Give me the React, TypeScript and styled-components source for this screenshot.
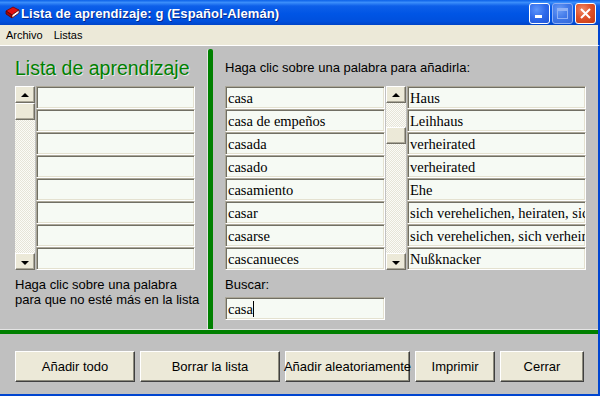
import React from 'react';
import styled, { createGlobalStyle } from 'styled-components';

const GlobalStyle = createGlobalStyle`
  html, body {
    margin: 0;
    padding: 0;
    background: #c0c0c0;
  }
  * {
    box-sizing: border-box;
  }
`;

const LEARN_ROWS = 8;

const WORDS = [
  { es: 'casa', de: 'Haus' },
  { es: 'casa de empeños', de: 'Leihhaus' },
  { es: 'casada', de: 'verheirated' },
  { es: 'casado', de: 'verheirated' },
  { es: 'casamiento', de: 'Ehe' },
  { es: 'casar', de: 'sich verehelichen, heiraten, sich verheiraten' },
  { es: 'casarse', de: 'sich verehelichen, sich verheiraten' },
  { es: 'cascanueces', de: 'Nußknacker' },
];

const BUTTONS = [
  { label: 'Añadir todo', width: 120 },
  { label: 'Borrar la lista', width: 140 },
  { label: 'Añadir aleatoriamente', width: 125 },
  { label: 'Imprimir', width: 80 },
  { label: 'Cerrar', width: 84 },
];

const BookIcon = () => (
  <svg width="16" height="14" viewBox="0 0 16 14">
    <path d="M2 5 L9 1 L15 4 L8 9 Z" fill="#e01010" stroke="#700000" strokeWidth="0.8" />
    <path d="M2 5 L8 9 L8 12 L2 8 Z" fill="#a00808" stroke="#600000" strokeWidth="0.8" />
    <path d="M8 9 L15 4 L15 7 L8 12 Z" fill="#ffffff" stroke="#700000" strokeWidth="0.8" />
  </svg>
);

const App: React.FC = () => {
  return (
    <>
      <GlobalStyle />
      <Window>
        <TitleBar>
          <TitleLeft>
            <BookIcon />
            <TitleText>Lista de aprendizaje: g (Español-Alemán)</TitleText>
          </TitleLeft>
          <Controls>
            <CtrlButton kind="min">
              <MinBar />
            </CtrlButton>
            <CtrlButton kind="max">
              <MaxBox />
            </CtrlButton>
            <CtrlButton kind="close">
              <CloseX>
                <svg width="11" height="11" viewBox="0 0 11 11">
                  <path d="M1 1 L10 10 M10 1 L1 10" stroke="#fff" strokeWidth="2" />
                </svg>
              </CloseX>
            </CtrlButton>
          </Controls>
        </TitleBar>
        <MenuBar>
          <MenuItem>Archivo</MenuItem>
          <MenuItem>Listas</MenuItem>
        </MenuBar>
        <Body>
          <Main>
            <LeftPane>
              <PaneTitle>Lista de aprendizaje</PaneTitle>
              <ListFrame>
                <ScrollBar>
                  <ScrollButton><ArrowUp /></ScrollButton>
                  <Thumb />
                  <Track />
                  <ScrollButton><ArrowDown /></ScrollButton>
                </ScrollBar>
                <Column width={159}>
                  {Array.from({ length: LEARN_ROWS }).map((_, i) => (
                    <Cell key={i} />
                  ))}
                </Column>
              </ListFrame>
              <Note>
                Haga clic sobre una palabra
                <br />
                para que no esté más en la lista
              </Note>
            </LeftPane>
            <VDivider />
            <RightPane>
              <Label>Haga clic sobre una palabra para añadirla:</Label>
              <ListFrame>
                <Column width={160}>
                  {WORDS.map((w) => (
                    <Cell key={w.es}>{w.es}</Cell>
                  ))}
                </Column>
                <ScrollBar>
                  <ScrollButton><ArrowUp /></ScrollButton>
                  <Track grow={false} />
                  <Thumb />
                  <Track />
                  <ScrollButton><ArrowDown /></ScrollButton>
                </ScrollBar>
                <Column width={179}>
                  {WORDS.map((w, i) => (
                    <Cell key={i}>{w.de}</Cell>
                  ))}
                </Column>
              </ListFrame>
              <SearchLabel>Buscar:</SearchLabel>
              <SearchBox>
                casa<Caret />
              </SearchBox>
            </RightPane>
          </Main>
          <HDivider />
          <ButtonRow>
            {BUTTONS.map((b) => (
              <Button key={b.label} width={b.width}>{b.label}</Button>
            ))}
          </ButtonRow>
        </Body>
      </Window>
    </>
  );
};

const Window = styled.div`
  width: 600px;
  height: 396px;
  display: flex;
  flex-direction: column;
  overflow: hidden;
  font-family: 'Liberation Sans', Arial, sans-serif;
`;

const TitleBar = styled.div`
  height: 25px;
  flex: none;
  display: flex;
  align-items: center;
  justify-content: space-between;
  padding: 0 4px 0 4px;
  background: linear-gradient(
    to bottom,
    #0b61e8 0%,
    #3a8dfa 10%,
    #0d5fe9 24%,
    #0055e5 55%,
    #0050dd 85%,
    #0044c8 100%
  );
`;

const TitleLeft = styled.div`
  display: flex;
  align-items: center;
  gap: 1px;
  padding-top: 1px;
`;

const TitleText = styled.span`
  color: #ffffff;
  font-weight: bold;
  font-size: 13px;
  letter-spacing: 0.1px;
  text-shadow: 1px 1px 0 #0a2a8a;
`;

const Controls = styled.div`
  display: flex;
  gap: 2px;
  padding-top: 1px;
`;

const CtrlButton = styled.div<{ kind: 'min' | 'max' | 'close' }>`
  width: 21px;
  height: 21px;
  border-radius: 3px;
  border: 1px solid ${({ kind }) => (kind === 'max' ? '#8fb1f5' : '#ffffff')};
  position: relative;
  display: flex;
  align-items: center;
  justify-content: center;
  background: ${({ kind }) =>
    kind === 'close'
      ? 'radial-gradient(circle at 35% 30%, #f08a68 0%, #e0522a 45%, #c23a12 100%)'
      : kind === 'max'
      ? 'radial-gradient(circle at 35% 30%, #6a9cf6 0%, #3f77e8 50%, #3467d8 100%)'
      : 'radial-gradient(circle at 35% 30%, #5d95fb 0%, #2f69ea 50%, #1f55d6 100%)'};
`;

const MinBar = styled.div`
  position: absolute;
  left: 5px;
  bottom: 5px;
  width: 7px;
  height: 3px;
  background: #ffffff;
`;

const MaxBox = styled.div`
  width: 11px;
  height: 11px;
  border: 1px solid #8fb1f5;
  border-top-width: 3px;
`;

const CloseX = styled.div`
  display: flex;
`;

const MenuBar = styled.div`
  height: 21px;
  flex: none;
  display: flex;
  align-items: center;
  gap: 11px;
  padding: 0 6px 1px;
  background: #ece9d8;
  border-bottom: 1px solid #ffffff;
  border-right: 2px solid #0045d0;
`;

const MenuItem = styled.span`
  font-size: 11px;
  color: #000000;
`;

const Body = styled.div`
  flex: 1;
  display: flex;
  flex-direction: column;
  background: #c0c0c0;
  border-right: 2px solid #0045d0;
  border-bottom: 2px solid #0045d0;
`;

const Main = styled.div`
  height: 284px;
  display: flex;
`;

const LeftPane = styled.div`
  width: 208px;
  padding: 10px 0 0 15px;
  display: flex;
  flex-direction: column;
`;

const PaneTitle = styled.div`
  font-size: 19.5px;
  line-height: 24px;
  color: #008000;
  text-shadow: 1px 1px 0 #e8e8e8;
  margin-bottom: 6px;
  white-space: nowrap;
`;

const VDivider = styled.div`
  width: 5px;
  margin-top: 3px;
  background: #008000;
  border-radius: 2px 2px 0 0;
  box-shadow: -1px 0 0 #e4e4e4;
`;

const RightPane = styled.div`
  flex: 1;
  padding: 14px 0 0 12px;
  display: flex;
  flex-direction: column;
`;

const Label = styled.div`
  font-size: 13px;
  line-height: 15px;
  color: #000000;
  margin-bottom: 11px;
`;

const ListFrame = styled.div`
  display: flex;
  gap: 1px;
  height: 184px;
`;

const ScrollBar = styled.div`
  width: 20px;
  display: flex;
  flex-direction: column;
  background: repeating-conic-gradient(#e6e4d8 0 25%, #fbfbf7 0 50%) 0 0 / 2px 2px;
`;

const ScrollButton = styled.div`
  height: 17px;
  flex: none;
  display: flex;
  align-items: center;
  justify-content: center;
  background: #ece9d8;
  border: 1px solid;
  border-color: #ffffff #716f64 #716f64 #ffffff;
  box-shadow: inset -1px -1px 0 #aca899;
`;

const Thumb = styled(ScrollButton)`
  height: 17px;
`;

const Track = styled.div<{ grow?: boolean }>`
  flex: ${({ grow = true }) => (grow ? 1 : 'none')};
  height: ${({ grow = true }) => (grow ? 'auto' : '24px')};
`;

const ArrowUp = styled.div`
  width: 0;
  height: 0;
  border-left: 4px solid transparent;
  border-right: 4px solid transparent;
  border-bottom: 4px solid #000000;
`;

const ArrowDown = styled.div`
  width: 0;
  height: 0;
  border-left: 4px solid transparent;
  border-right: 4px solid transparent;
  border-top: 4px solid #000000;
  margin-top: 2px;
`;

const Column = styled.div<{ width: number }>`
  width: ${({ width }) => width}px;
  display: flex;
  flex-direction: column;
`;

const Cell = styled.div`
  height: 23px;
  flex: none;
  display: flex;
  align-items: center;
  padding: 1px 0 0 2px;
  background: #f6faf4;
  border: 1px solid;
  border-color: #aca899 #ffffff #ffffff #aca899;
  box-shadow: inset 1px 1px 0 #716f64, inset -1px -1px 0 #e4e1d0;
  font-family: 'Liberation Serif', 'Times New Roman', serif;
  font-size: 14.5px;
  color: #000000;
  white-space: nowrap;
  overflow: hidden;
`;

const Note = styled.div`
  margin-top: 7px;
  font-size: 13px;
  line-height: 15px;
  color: #000000;
`;

const SearchLabel = styled.div`
  margin-top: 7px;
  font-size: 13px;
  line-height: 15px;
  color: #000000;
`;

const SearchBox = styled(Cell)`
  margin-top: 5px;
  width: 160px;
`;

const Caret = styled.span`
  display: inline-block;
  width: 1px;
  height: 16px;
  background: #000000;
`;

const HDivider = styled.div`
  height: 4px;
  flex: none;
  background: #008000;
  box-shadow: 0 -1px 0 #e4e4e4;
`;

const ButtonRow = styled.div`
  flex: 1;
  display: flex;
  gap: 5px;
  padding: 17px 0 0 15px;
  align-items: flex-start;
`;

const Button = styled.div<{ width: number }>`
  width: ${({ width }) => width}px;
  height: 31px;
  display: flex;
  align-items: center;
  justify-content: center;
  background: #ece9d8;
  border: 1px solid;
  border-color: #ffffff #404040 #404040 #ffffff;
  box-shadow: inset -1px -1px 0 #8c8a7c;
  font-size: 13px;
  color: #000000;
  white-space: nowrap;
  padding-bottom: 1px;
`;

export default App;
